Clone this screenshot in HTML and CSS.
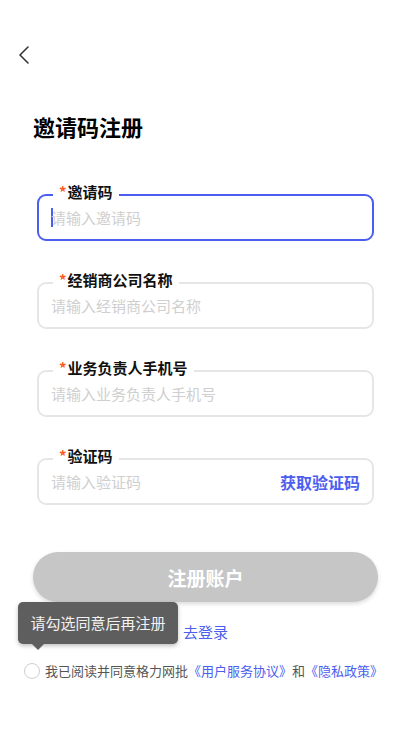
FILE: index.html
```html
<!DOCTYPE html>
<html lang="zh-CN">
<head>
    <meta charset="UTF-8">
    <meta name="viewport" content="width=device-width, initial-scale=1.0">
    <title>邀请码注册</title>
    <link rel="stylesheet" href="styles.css">
</head>
<body>

    <!-- 顶部返回 -->
    <div class="nav-bar">
        <svg class="back" width="12" height="20" viewBox="0 0 12 20">
            <path d="M10 2 L2 10 L10 18" fill="none" stroke="#333" stroke-width="1.6" stroke-linecap="round" stroke-linejoin="round"/>
        </svg>
    </div>

    <div class="page">
        <h2 class="title">邀请码注册</h2>

        <div class="form">
            <div class="field active">
                <span class="field-label"><i>*</i>邀请码</span>
                <span class="caret"></span>
                <input type="text" placeholder="请输入邀请码">
            </div>

            <div class="field">
                <span class="field-label"><i>*</i>经销商公司名称</span>
                <input type="text" placeholder="请输入经销商公司名称">
            </div>

            <div class="field">
                <span class="field-label"><i>*</i>业务负责人手机号</span>
                <input type="text" placeholder="请输入业务负责人手机号">
            </div>

            <div class="field">
                <span class="field-label"><i>*</i>验证码</span>
                <input type="text" placeholder="请输入验证码">
                <span class="get-code">获取验证码</span>
            </div>
        </div>

        <button class="submit">注册账户</button>
    </div>

    <div class="bottom">
        <div class="login-row">
            <a class="link">去登录</a>
        </div>

        <div class="tooltip">请勾选同意后再注册</div>

        <div class="agree">
            <span class="check"></span>
            <span>我已阅读并同意格力网批<a class="link">《用户服务协议》</a>和<a class="link">《隐私政策》</a></span>
        </div>
    </div>

</body>
</html>
```

FILE: styles.css
```css
body {
    margin: 0;
    font-family: "Noto Sans CJK SC", "Noto Sans", sans-serif;
    background-color: #fff;
    color: #111;
}
.nav-bar {
    padding: 45px 0 0 18px;
    height: 20px;
}
.back {
    display: block;
}
.page {
    padding: 0 33px;
}
.title {
    margin: 46px 0 0;
    font-size: 22px;
    line-height: 30px;
    font-weight: bold;
    color: #000;
}
.form {
    margin-top: 53px;
}
.field {
    position: relative;
    display: flex;
    align-items: center;
    height: 43px;
    margin: 0 4px 41px;
    padding: 0 12px;
    border: 2px solid #e6e6e6;
    border-radius: 9px;
}
.field.active {
    border-color: #4b5ef0;
}
.field:last-child {
    margin-bottom: 0;
}
/* 标签压在边框上 */
.field-label {
    position: absolute;
    left: 14px;
    top: -15px;
    padding: 0 6px;
    background: #fff;
    font-size: 15px;
    line-height: 22px;
    font-weight: bold;
    color: #111;
}
.field-label i {
    font-style: normal;
    color: #ff5a1f;
    margin-right: 1px;
}
.field input {
    flex: 1;
    min-width: 0;
    border: none;
    outline: none;
    padding: 0;
    font-family: inherit;
    font-size: 15px;
    color: #333;
    background: transparent;
}
.field input::placeholder {
    color: #cfcfcf;
}
.caret {
    width: 2px;
    height: 19px;
    background: #4b5ef0;
    margin-right: -2px;
}
.get-code {
    font-size: 16px;
    font-weight: bold;
    color: #4b5ef0;
}
.submit {
    display: block;
    width: 100%;
    height: 50px;
    margin-top: 47px;
    border: none;
    border-radius: 25px;
    background-color: #c6c6c6;
    box-shadow: 0 2px 4px rgba(0,0,0,0.15);
    color: #fff;
    font-family: inherit;
    font-size: 19px;
    font-weight: bold;
}
.bottom {
    position: relative;
    padding-top: 19px;
}
.login-row {
    padding-left: 183px;
    font-size: 15px;
    line-height: 22px;
}
.link {
    color: #4b5ef0;
    text-decoration: none;
}
.tooltip {
    position: absolute;
    left: 18px;
    top: 0;
    width: 160px;
    height: 42px;
    line-height: 42px;
    text-align: center;
    background: #5e5e5e;
    color: #f2f2f2;
    font-size: 15px;
    border-radius: 5px;
    box-shadow: 0 2px 4px rgba(0,0,0,0.25);
}
.tooltip::after {
    content: "";
    position: absolute;
    left: 14px;
    bottom: -6px;
    border-left: 6px solid transparent;
    border-right: 6px solid transparent;
    border-top: 6px solid #5e5e5e;
}
.agree {
    display: flex;
    align-items: center;
    gap: 5px;
    margin-top: 18px;
    padding-left: 24px;
    font-size: 13px;
    line-height: 20px;
    color: #555;
}
.check {
    width: 14px;
    height: 14px;
    border: 1px solid #cfcfcf;
    border-radius: 50%;
}
```
